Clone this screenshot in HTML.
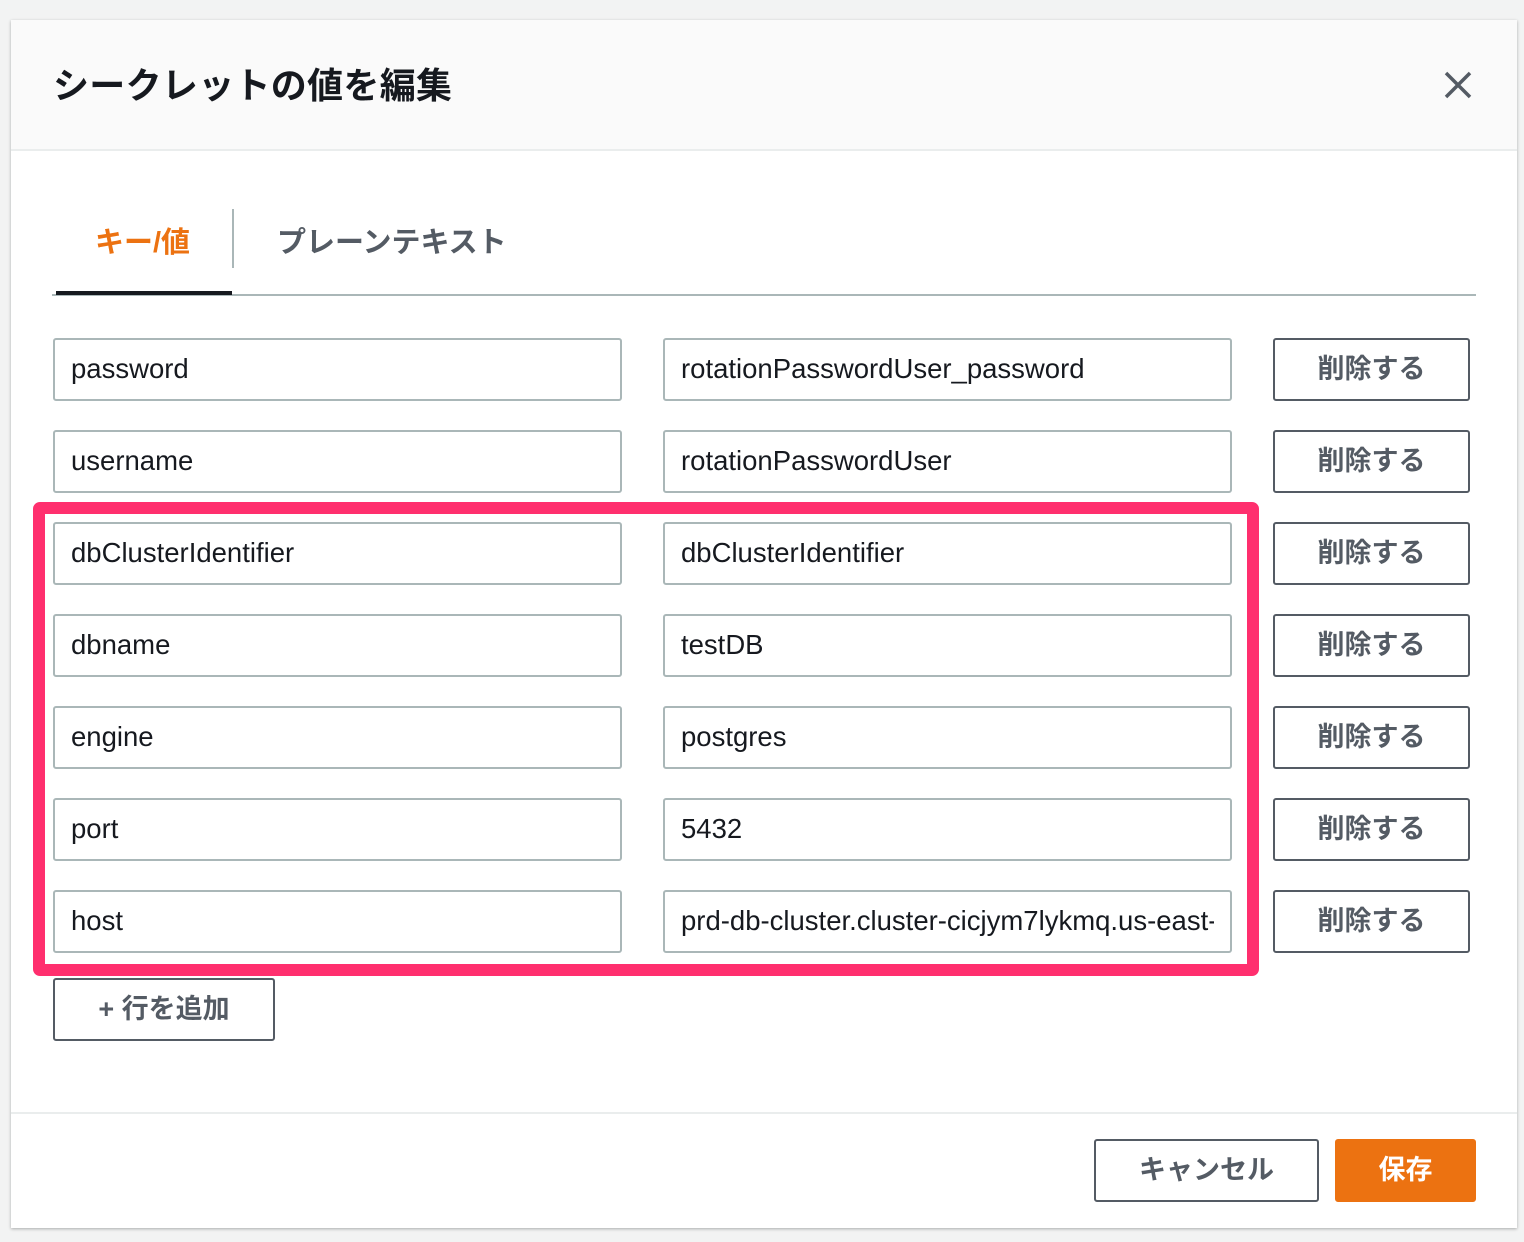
<!DOCTYPE html>
<html><head><meta charset="utf-8"><style>
*{box-sizing:border-box;margin:0;padding:0}
body{width:1524px;height:1242px;background:#f2f3f3;position:relative;overflow:hidden;font-family:"Liberation Sans","Noto Sans CJK JP",sans-serif}
.modal{position:absolute;left:11px;top:20px;width:1506px;height:1208px;background:#fff;box-shadow:0 1px 3px rgba(0,0,0,.3)}
.hdr{position:absolute;left:0;top:0;width:100%;height:131px;background:#fafafa;border-bottom:2px solid #eaeded}
.title{position:absolute;left:42px;top:37px;font-size:36px;font-weight:bold;color:#16191f;letter-spacing:0.3px}
.x{position:absolute;left:1432px;top:50px}
.abs{position:absolute}
.inp{position:absolute;height:63px;border:2px solid #aab7b8;border-radius:3px;font-size:27.5px;color:#16191f;padding:0 16px;line-height:58px;white-space:nowrap;overflow:hidden;background:#fff}
.btn{position:absolute;height:63px;border:2px solid #545b64;border-radius:3px;font-size:27px;font-weight:bold;color:#545b64;text-align:center;line-height:58px;background:#fff}
</style></head><body>
<div class="modal">
<div class="hdr"><div class="title">シークレットの値を編集</div>
<svg class="x" width="30" height="30" viewBox="0 0 30 30"><path d="M3 3L27 27M27 3L3 27" stroke="#545b64" stroke-width="3.5" fill="none"/></svg></div>
</div>
<div class="abs" style="left:95px;top:219px;font-size:29px;font-weight:bold;color:#ec7211">キー/値</div>
<div class="abs" style="left:232px;top:209px;width:2px;height:59px;background:#aab7b8"></div>
<div class="abs" style="left:277px;top:219px;font-size:29px;font-weight:bold;color:#545b64">プレーンテキスト</div>
<div class="abs" style="left:52px;top:294px;width:1424px;height:2px;background:#aab7b8"></div>
<div class="abs" style="left:56px;top:291px;width:176px;height:4px;background:#16191f"></div>

<div class="inp" style="left:53px;top:338px;width:569px">password</div><div class="inp" style="left:663px;top:338px;width:569px">rotationPasswordUser_password</div><div class="btn" style="left:1273px;top:338px;width:197px">削除する</div>
<div class="inp" style="left:53px;top:430px;width:569px">username</div><div class="inp" style="left:663px;top:430px;width:569px">rotationPasswordUser</div><div class="btn" style="left:1273px;top:430px;width:197px">削除する</div>
<div class="inp" style="left:53px;top:522px;width:569px">dbClusterIdentifier</div><div class="inp" style="left:663px;top:522px;width:569px">dbClusterIdentifier</div><div class="btn" style="left:1273px;top:522px;width:197px">削除する</div>
<div class="inp" style="left:53px;top:614px;width:569px">dbname</div><div class="inp" style="left:663px;top:614px;width:569px">testDB</div><div class="btn" style="left:1273px;top:614px;width:197px">削除する</div>
<div class="inp" style="left:53px;top:706px;width:569px">engine</div><div class="inp" style="left:663px;top:706px;width:569px">postgres</div><div class="btn" style="left:1273px;top:706px;width:197px">削除する</div>
<div class="inp" style="left:53px;top:798px;width:569px">port</div><div class="inp" style="left:663px;top:798px;width:569px">5432</div><div class="btn" style="left:1273px;top:798px;width:197px">削除する</div>
<div class="inp" style="left:53px;top:890px;width:569px">host</div><div class="inp" style="left:663px;top:890px;width:569px"><div style="width:533px;overflow:hidden">prd-db-cluster.cluster-cicjym7lykmq.us-east-1.rds</div></div><div class="btn" style="left:1273px;top:890px;width:197px">削除する</div>

<div class="abs" style="left:33px;top:502px;width:1226px;height:474px;border:12px solid #ff2f6e;border-radius:7px"></div>
<div class="btn" style="left:53px;top:978px;width:222px">+ 行を追加</div>
<div class="abs" style="left:11px;top:1112px;width:1506px;height:2px;background:#eaeded"></div>
<div class="btn" style="left:1094px;top:1139px;width:225px">キャンセル</div>
<div class="btn" style="left:1335px;top:1139px;width:141px;background:#ec7211;border-color:#ec7211;color:#fff">保存</div>
</body></html>
